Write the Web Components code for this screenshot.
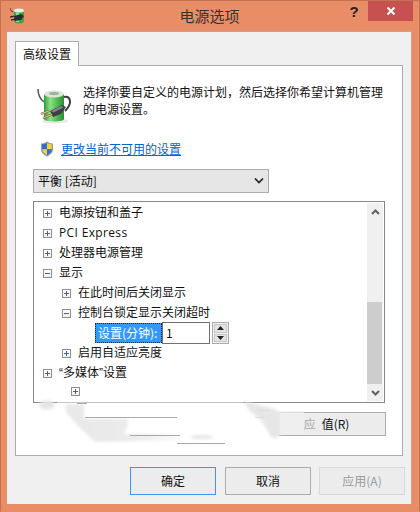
<!DOCTYPE html>
<html lang="zh"><head><meta charset="utf-8"><title>电源选项</title>
<style>
html,body{margin:0;padding:0;background:#e98d67}
body{font:12px/18px "Noto Sans CJK SC","Noto Sans",sans-serif;color:#111}
.lat{font-family:"Liberation Sans",sans-serif}
.pci{font-family:"Open Sans",sans-serif;letter-spacing:.35px}
.fade{color:#a9a9a9;margin-right:6px}
</style></head><body>
<template id="battery"><svg viewBox="0 0 36 36" width="36" height="36" aria-hidden="true">
<defs><linearGradient id="bg" x1="0" x2="1" y1="0" y2="0"><stop offset="0" stop-color="#2e9a3a"/><stop offset=".3" stop-color="#8ee283"/><stop offset=".6" stop-color="#56c35a"/><stop offset="1" stop-color="#2a8f34"/></linearGradient></defs>
<path d="M2 1c0 5 2 10 6 13" fill="none" stroke="#50545c" stroke-width="1.500"/>
<path d="M28 9c4-1 6 1 6 5 0 3-2 6-5 9" fill="none" stroke="#3a3d46" stroke-width="2"/>
<ellipse cx="19" cy="33" rx="13" ry="2.500" fill="#e8e8e8"/>
<path d="M8 6v25c0 1.500 4.500 2.500 10 2.500s10-1 10-2.500V6z" fill="url(#bg)"/>
<ellipse cx="18" cy="6" rx="10" ry="3.500" fill="#dbe5d8"/><ellipse cx="18" cy="5.500" rx="5" ry="1.700" fill="#9db39e"/>
<path d="M14 23l12-6 4 2-5 7-8 3z" fill="#3c3f48"/><path d="M15 23l10-5 2.500 1.500-10 5z" fill="#80858f"/>
<path d="M5 26l9-3.500M7 30l9-3.500" stroke="#6e5a35" stroke-width="2.200" fill="none"/>
<path d="M5 26l9-3.500M7 30l9-3.500" stroke="#e6cc96" stroke-width="1.100" fill="none"/>
</svg></template>
<template id="shield"><svg viewBox="0 0 14 16" width="14" height="16" aria-hidden="true">
<path d="M7 .5C5 2 3 2.500 1 2.500v6c0 3.500 3 5.500 6 7 3-1.500 6-3.500 6-7v-6C11 2.500 9 2 7 .5z" fill="#8f96a0"/>
<path d="M7 2.200v6H2.200v-5c1.800 0 3.300-.3 4.800-1z" fill="#2f6fd0"/><path d="M7 2.200v6h4.800v-5c-1.800 0-3.300-.3-4.800-1z" fill="#f3d04a"/>
<path d="M2.300 8.200H7v5.800c-2.300-1.200-4.500-2.800-4.700-5.800z" fill="#f3d04a"/><path d="M11.700 8.200H7v5.800c2.300-1.200 4.500-2.800 4.700-5.800z" fill="#2f6fd0"/>
</svg></template>
<template id="small"><svg viewBox="0 0 16 16" width="16" height="16" aria-hidden="true">
<path d="M0 0c0 2 1 3 3 4" fill="none" stroke="#333" stroke-width="1"/>
<path d="M4 3v10.500c0 1 2.500 2 5 2s5-1 5-2V3z" fill="#35a845"/><path d="M6 5h3v9H6z" fill="#8ee283"/>
<ellipse cx="9" cy="2.500" rx="5" ry="2" fill="#e6efe6"/>
<path d="M4 8l7-2 3 2-3 4-6 1z" fill="#2b2d34"/><path d="M0 8.500l4-1v1.200l-4 1zM1 11.500l4-1v1.200l-4 1z" fill="#1e1e1e"/>
</svg></template>
<script>
function def(name, html, init){
  customElements.define(name, class extends HTMLElement{
    constructor(){super();this.attachShadow({mode:"open"}).innerHTML=html;}
    connectedCallback(){ if(init) init(this); }
  });
}
function tpl(id){return document.getElementById(id).innerHTML;}
const expBase=`.e{box-sizing:border-box;width:9px;height:9px;border:1px solid #8e8f8f;background:linear-gradient(#fff,#f0f0f0);position:relative;display:block;flex:none}
.e::before{content:"";position:absolute;left:1px;right:1px;top:3px;height:1px;background:#4d6185}
.e.plus::after{content:"";position:absolute;top:1px;bottom:1px;left:3px;width:1px;background:#4d6185}`;

def("title-bar",`<style>:host{display:flex;height:30px;align-items:flex-start;position:relative;flex:none}
.ic{margin:7px 0 0 3px;width:16px;height:16px}
.t{position:absolute;left:0;right:0;top:5px;text-align:center;font-size:15px;line-height:20px;color:#333}
.sp{flex:1}
.h{width:14px;margin-top:2px;font:bold 15px/18px "Liberation Sans",sans-serif;color:#222;text-align:center;margin-right:7px}
.x{width:45px;height:20px;background:#c75050;margin-right:-1px;display:flex;align-items:center;justify-content:center}
</style><span class="ic">${tpl("small")}</span><span class="t">电源选项</span><span class="sp"></span><span class="h">?</span>
<span class="x"><svg width="10" height="10" viewBox="0 0 10 10"><path d="M1.500 1.500l7 7M8.500 1.500l-7 7" stroke="#fff" stroke-width="2"/></svg></span>`);

def("power-window",`<style>:host{display:flex;flex-direction:column;box-sizing:border-box;width:420px;height:512px;background:#e98d67;border:1px solid #c47253;border-bottom-color:#e98d67;padding:0 7px 7px 6px;position:relative;overflow:hidden}
.client{flex:1;background:#f0f0f0;border:1px solid #c9a08e;border-width:1px 1px 0 0;display:flex;flex-direction:column;padding:9px 8px 0 8px;min-height:0}
.foot{display:flex;justify-content:flex-end;gap:8px;margin-top:11px;margin-right:-2px}
</style><slot name="title"></slot><div class="client"><slot></slot><div class="foot"><slot name="foot"></slot></div></div>`);

def("tab-panel",`<style>:host{display:flex;flex-direction:column;flex:none}
.tab{box-sizing:border-box;width:64px;height:25px;background:#fff;border:1px solid #acacac;border-bottom:0;margin-bottom:-1px;position:relative;z-index:1;padding:3px 0 0 7px;line-height:18px}
.panel{box-sizing:border-box;height:391px;background:#fff;border:1px solid #acacac;padding:17px 17px 0 17px;display:flex;flex-direction:column;position:relative}
</style><div class="tab"><slot name="tab"></slot></div><div class="panel"><slot></slot></div>`);

def("intro-block",`<style>:host{display:flex;flex:none;height:50px}
.i{width:36px;height:36px;margin:5px 11px 0 3px;flex:none}
.t{margin:0;line-height:17px;width:310px;color:#111}
</style><span class="i">${tpl("battery")}</span><p class="t"><slot></slot></p>`);

def("change-link",`<style>:host{display:flex;align-items:center;height:18px;margin-top:7px;flex:none;padding-left:7px}
.s{width:14px;height:16px;margin-right:7px}
a{color:#0066cc;text-decoration:underline}</style><span class="s">${tpl("shield")}</span><a href="#"><slot></slot></a>`);

def("plan-select",`<style>:host{display:flex;box-sizing:border-box;width:236px;height:24px;margin-top:11px;background:#e6e6e6;border:1px solid #acacac;align-items:center;padding:0 4px;flex:none;color:#111}
.t{flex:1}</style><span class="t"><slot></slot></span><svg width="10" height="6" viewBox="0 0 10 6"><path d="M1 .5l4 4 4-4" fill="none" stroke="#222" stroke-width="1.700"/></svg>`);

def("tree-box",`<style>:host{display:flex;box-sizing:border-box;width:352px;height:202px;margin-top:8px;background:#fff;border:1px solid #828790;padding:1px;flex:none}
.list{flex:1;min-width:0}
.sb{width:16px;background:#f0f0f0;display:flex;flex-direction:column;flex:none}
.b{height:17px;display:flex;align-items:center;justify-content:center;flex:none}
.track{flex:1;display:flex;flex-direction:column;justify-content:flex-end}
.thumb{height:82px;background:#cdcdcd;margin-right:1px}
</style><div class="list"><slot></slot></div><div class="sb">
<div class="b"><svg width="9" height="6" viewBox="0 0 9 6"><path d="M1 5l3.500-3.500L8 5" fill="none" stroke="#606060" stroke-width="2"/></svg></div>
<div class="track"><div class="thumb"></div></div>
<div class="b"><svg width="9" height="6" viewBox="0 0 9 6"><path d="M1 1l3.500 3.500L8 1" fill="none" stroke="#606060" stroke-width="2"/></svg></div></div>`);

def("tree-row",`<style>:host{display:flex;align-items:center;height:20px;color:#111}
${expBase}
.e{margin-right:7px}
.x{padding-bottom:2px}
:host([level="0"]){padding-left:8px}
:host([level="1"]){padding-left:27px}
:host([level="2"]){padding-left:36px;margin-top:-2px}
</style><span class="e"></span><span class="x"><slot></slot></span>`,el=>{
  const e=el.shadowRoot.querySelector(".e");
  if(el.getAttribute("state")!=="open") e.classList.add("plus");
});

def("tree-edit",`<style>:host{display:flex;align-items:center;height:20px;padding-left:60px}
.l{box-sizing:border-box;width:67px;height:20px;background:#3399ff;color:#fff;border:1px dotted #e8963c;outline:1px dotted #222;outline-offset:-1px;padding-left:2px;line-height:17px;white-space:nowrap}
.in{box-sizing:border-box;width:48px;height:22px;background:#fff;border:1px solid #6f6f6f;padding-left:3px;line-height:19px}
.spin{box-sizing:border-box;width:17px;height:22px;border:1px solid #acacac;background:#f0f0f0;display:flex;flex-direction:column;gap:1px;padding:1px;margin-left:2px}
.spin span{flex:1;background:#e4e4e4;border:1px solid #c8c8c8;display:flex;align-items:center;justify-content:center}
</style><span class="l"><slot name="label"></slot></span><span class="in"><slot></slot></span><span class="spin">
<span><svg width="7" height="4" viewBox="0 0 7 4"><path d="M3.500 0L7 4H0z" fill="#222"/></svg></span>
<span><svg width="7" height="4" viewBox="0 0 7 4"><path d="M0 0h7L3.500 4z" fill="#222"/></svg></span></span>`);

def("win-button",`<style>:host{display:flex;box-sizing:border-box;width:86px;height:28px;background:#ececec;border:1px solid #acacac;align-items:center;justify-content:center;color:#111;flex:none}
:host([default]){border-color:#3399ff;margin-right:1px}
:host([disabled]){border-color:#d9d9d9;color:#9a9a9a}
</style><slot></slot>`);

def("restore-row",`<style>:host{display:flex;justify-content:flex-end;margin-top:9px;flex:none;margin-right:-1px}
.b{box-sizing:border-box;width:107px;height:24px;background:#ececec;border:1px solid #acacac;display:flex;align-items:center;justify-content:center;padding-right:12px}
</style><div class="b"><slot></slot></div>`);

def("erase-smudge",`<style>:host{position:absolute;left:-1px;top:-1px;width:420px;height:512px;pointer-events:none;display:block}
svg{display:block}</style>
<svg width="420" height="512" viewBox="0 0 420 512" aria-hidden="true"><defs><filter id="b" x="-30%" y="-60%" width="160%" height="220%"><feGaussianBlur stdDeviation="1.600"/></filter>
<linearGradient id="g" x1="0" x2="1" y1="0" y2="0"><stop offset="0" stop-color="#e8e8e8"/><stop offset=".6" stop-color="#ebebeb"/><stop offset="1" stop-color="#fbfbfb"/></linearGradient></defs>
<rect x="57" y="399.500" width="186" height="3" fill="#fff"/>
<g filter="url(#b)">
<ellipse cx="47" cy="405" rx="8" ry="4.500" fill="#e6e6e6"/>
<path d="M66 404H84V419H128V424L124 434H170L182 440 95 442 80 428 66 412z" fill="url(#g)"/>
<ellipse cx="202" cy="437" rx="12" ry="2" fill="#e6e6e6"/>
<path d="M243 401L272 408 280 412V436L276 438 271 437 262 421 250 411z" fill="#e6e6e6"/>
</g>
<path d="M77 403.500h10M85 417.500h92M130 435.500h50M177 443.500h48" stroke="#a8a8a8" stroke-width="1" fill="none"/>
<path d="M257 410.500h13M255 417.500h9" stroke="#dcdcdc" stroke-width="1" fill="none"/>
<rect x="279" y="411" width="25" height="24" fill="#f0f0f0" opacity=".72"/>
</svg>`);
</script>
<power-window>
  <title-bar slot="title"></title-bar>
  <tab-panel>
    <span slot="tab">高级设置</span>
    <intro-block>选择你要自定义的电源计划，然后选择你希望计算机管理的电源设置。</intro-block>
    <change-link>更改当前不可用的设置</change-link>
    <plan-select>平衡 [活动]</plan-select>
    <tree-box>
      <tree-row level="0">电源按钮和盖子</tree-row>
      <tree-row level="0"><span class="pci">PCI Express</span></tree-row>
      <tree-row level="0">处理器电源管理</tree-row>
      <tree-row level="0" state="open">显示</tree-row>
      <tree-row level="1">在此时间后关闭显示</tree-row>
      <tree-row level="1" state="open">控制台锁定显示关闭超时</tree-row>
      <tree-edit><span slot="label">设置(分钟):</span>1</tree-edit>
      <tree-row level="1">启用自适应亮度</tree-row>
      <tree-row level="0"><span class="lat">“</span>多媒体<span class="lat">”</span>设置</tree-row>
      <tree-row level="2"></tree-row>
    </tree-box>
    <restore-row><span class="fade">应</span>值(R)</restore-row>
  </tab-panel>
  <win-button slot="foot" default>确定</win-button>
  <win-button slot="foot">取消</win-button>
  <win-button slot="foot" disabled>应用(A)</win-button>
  <erase-smudge></erase-smudge>
</power-window>
</body></html>
